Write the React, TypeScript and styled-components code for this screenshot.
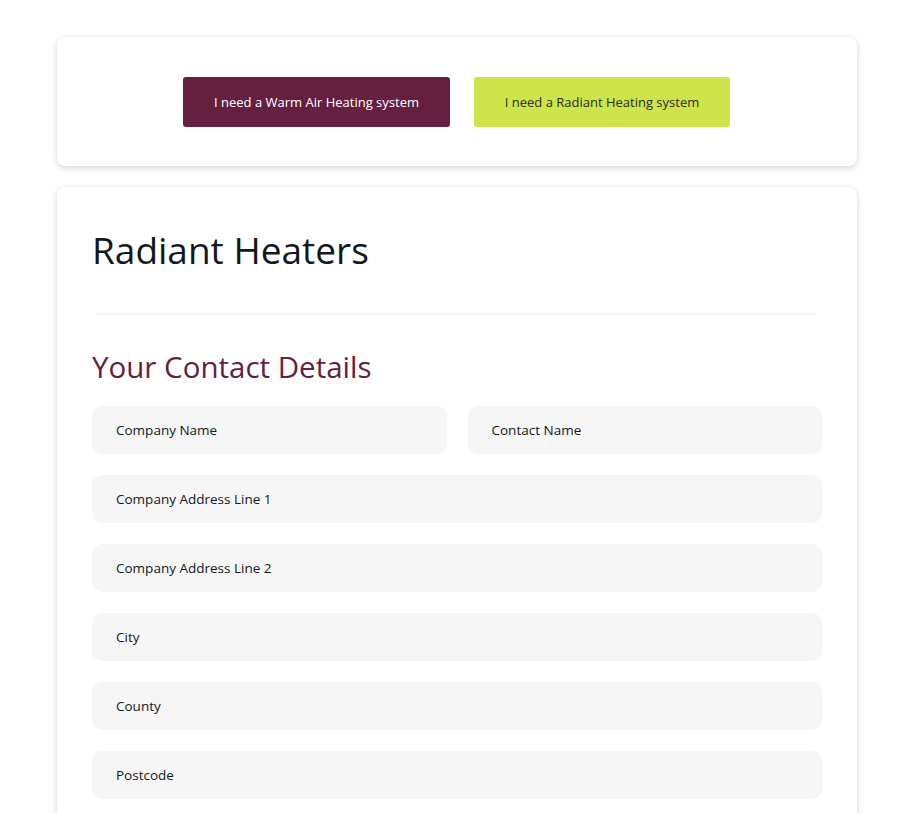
import styled, { createGlobalStyle } from 'styled-components';

const GlobalStyle = createGlobalStyle`
  * {
    box-sizing: border-box;
  }
  body {
    margin: 0;
    background: #ffffff;
    font-family: 'Open Sans', 'Liberation Sans', sans-serif;
    color: #121820;
  }
`;

const fields = [
  ['Company Address Line 1'],
  ['Company Address Line 2'],
  ['City'],
  ['County'],
  ['Postcode'],
];

const App = () => {
  return (
    <>
      <GlobalStyle />
      <Page>
        <Card $padding="40px 1px 39px 0">
          <ButtonRow>
            <ChoiceButton $variant="warm">I need a Warm Air Heating system</ChoiceButton>
            <ChoiceButton $variant="radiant">I need a Radiant Heating system</ChoiceButton>
          </ButtonRow>
        </Card>
        <Card $padding="38px 35px 40px">
          <Title>Radiant Heaters</Title>
          <Divider />
          <SectionTitle>Your Contact Details</SectionTitle>
          <Form>
            <FieldRow>
              <Field placeholder="Company Name" />
              <Field placeholder="Contact Name" />
            </FieldRow>
            {fields.map(([label]) => (
              <Field key={label} placeholder={label} />
            ))}
          </Form>
        </Card>
      </Page>
    </>
  );
};

export default App;

const Page = styled.div`
  width: 800px;
  margin: 37px 0 0 57px;
  display: flex;
  flex-direction: column;
  gap: 21px;
`;

const Card = styled.section<{ $padding: string }>`
  background: #ffffff;
  border-radius: 8px;
  padding: ${({ $padding }) => $padding};
  box-shadow: 0 2px 6px rgba(0, 0, 0, 0.16), 0 0 1px rgba(0, 0, 0, 0.06);
`;

const ButtonRow = styled.div`
  display: flex;
  justify-content: center;
  gap: 24px;
`;

const ChoiceButton = styled.button<{ $variant: 'warm' | 'radiant' }>`
  height: 50px;
  width: ${({ $variant }) => ($variant === 'warm' ? '267px' : '256px')};
  border: none;
  border-radius: 3px;
  font-family: inherit;
  font-size: 13px;
  font-weight: 500;
  cursor: pointer;
  background: ${({ $variant }) => ($variant === 'warm' ? '#66203f' : '#cfe44a')};
  color: ${({ $variant }) => ($variant === 'warm' ? '#ffffff' : '#2a2f2a')};
`;

const Title = styled.h1`
  margin: 0;
  font-size: 37px;
  font-weight: 400;
  line-height: 50px;
  color: #121820;
`;

const Divider = styled.hr`
  margin: 39px 5px 32px 4px;
  border: none;
  border-top: 1px solid #f0f0f0;
`;

const SectionTitle = styled.h2`
  margin: 0 0 19px;
  font-size: 29.5px;
  font-weight: 400;
  line-height: 40px;
  color: #66203f;
`;

const Form = styled.div`
  display: flex;
  flex-direction: column;
  gap: 21px;
`;

const FieldRow = styled.div`
  display: grid;
  grid-template-columns: 1fr 1fr;
  gap: 21px;
`;

const Field = styled.input`
  width: 100%;
  height: 48px;
  border: none;
  border-radius: 10px;
  background: #f6f6f6;
  padding: 0 24px;
  font-family: inherit;
  font-size: 13.5px;
  font-weight: 500;
  color: #121820;
  outline: none;
  &::placeholder {
    color: #121820;
    opacity: 1;
  }
`;
